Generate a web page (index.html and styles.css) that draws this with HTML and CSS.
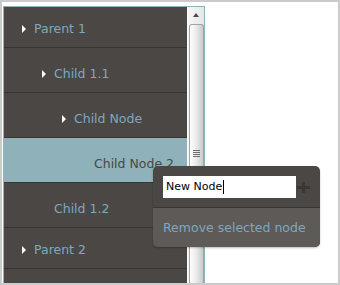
FILE: index.html
```html
<!DOCTYPE html>
<html lang="en">
<head>
    <meta charset="UTF-8">
    <meta name="viewport" content="width=device-width, initial-scale=1.0">
    <title>Tree Menu</title>
    <link rel="stylesheet" href="styles.css">
</head>
<body>
    <div class="frame">
        <div class="tree">
            <ul class="nodes">
                <li class="node parent level-0"><span class="arrow"></span>Parent 1</li>
                <li class="node level-1"><span class="arrow"></span>Child 1.1</li>
                <li class="node level-2"><span class="arrow"></span>Child Node</li>
                <li class="node level-3 selected">Child Node 2</li>
                <li class="node level-1">Child 1.2</li>
                <li class="node parent level-0"><span class="arrow"></span>Parent 2</li>
                <li class="node parent level-0"></li>
            </ul>
            <div class="scrollbar">
                <div class="scroll-up"></div>
                <div class="thumb">
                    <div class="grip"></div>
                </div>
            </div>
        </div>

        <!-- context menu -->
        <div class="menu">
            <div class="menu-add">
                <div class="field">New Node<span class="caret"></span></div>
                <svg class="plus" width="13" height="11" viewBox="0 0 13 11">
                    <rect x="0" y="4" width="13" height="3" fill="#3a3835"/>
                    <rect x="5" y="0" width="3" height="11" fill="#3a3835"/>
                </svg>
            </div>
            <div class="menu-item">Remove selected node</div>
        </div>
    </div>
</body>
</html>
```

FILE: styles.css
```css
body {
    margin: 0;
    font-family: "DejaVu Sans", sans-serif;
}

.frame {
    position: relative;
    height: 285px;
    box-sizing: border-box;
    border: 2px solid #cbcbcb;
    background: #fff;
    padding: 4px 0 0 1px;
    overflow: hidden;
}

.tree {
    display: flex;
    width: 202px;
    height: 300px;
    box-sizing: border-box;
    border: 1px solid #8fb3bb;
    background: #4a4744;
}

.nodes {
    flex: 1;
    list-style: none;
    margin: 0;
    padding: 0;
}

.node {
    position: relative;
    padding: 16px 0 8px 30px;
    line-height: 20px;
    height: 20px;
    font-size: 12.5px;
    color: #80a7c1;
    border-bottom: 1px solid #393734;
}

.node.parent {
    padding-top: 12px;
}

.node.level-1 { padding-left: 50px; }
.node.level-2 { padding-left: 70px; }
.node.level-3 { padding-left: 90px; }

.node.selected {
    background: #8fb1b9;
    color: #4a4744;
}

.arrow {
    position: absolute;
    margin-left: -12px;
    margin-top: 6px;
    width: 0;
    height: 0;
    border-top: 4px solid transparent;
    border-bottom: 4px solid transparent;
    border-left: 4px solid #fff;
}

.scrollbar {
    width: 17px;
    background: linear-gradient(90deg, #f6f6f6, #e6e6e6);
    border-left: 1px solid #fafafa;
    box-sizing: border-box;
    display: flex;
    flex-direction: column;
    align-items: center;
}

.scroll-up {
    height: 17px;
    width: 100%;
    position: relative;
}

.scroll-up::after {
    content: "";
    position: absolute;
    left: 5px;
    top: 6px;
    border-left: 3px solid transparent;
    border-right: 3px solid transparent;
    border-bottom: 4px solid #4a4a4a;
}

.thumb {
    width: 15px;
    flex: 1;
    box-sizing: border-box;
    border: 1px solid #a3a3a3;
    border-bottom: none;
    border-radius: 3px 3px 0 0;
    background: linear-gradient(90deg, #fdfdfd 0%, #ececec 45%, #c9c9c9 100%);
    display: flex;
    justify-content: center;
    padding-top: 125px;
}

.grip {
    width: 7px;
    height: 7px;
    background: repeating-linear-gradient(180deg, #6e6e6e 0 1px, transparent 1px 2px);
}

.menu {
    position: absolute;
    left: 151px;
    top: 164px;
    width: 167px;
    border-radius: 5px;
    overflow: hidden;
    background: #4a4744;
    box-shadow: 0 1px 2px rgba(0, 0, 0, 0.25);
}

.menu-add {
    display: flex;
    align-items: center;
    padding: 10px 0 9px 10px;
    border-bottom: 1px solid #393734;
}

.field {
    width: 133px;
    height: 22px;
    box-sizing: border-box;
    background: #fff;
    color: #000;
    font-size: 11px;
    line-height: 22px;
    padding-left: 3px;
    display: flex;
    align-items: center;
}

.caret {
    display: inline-block;
    width: 1px;
    height: 14px;
    background: #000;
    margin-left: 1px;
}

.plus {
    margin-left: 1px;
}

.menu-item {
    height: 39px;
    line-height: 39px;
    padding-left: 10px;
    background: #5d5a57;
    font-size: 12.5px;
    color: #80a7c1;
}
```
